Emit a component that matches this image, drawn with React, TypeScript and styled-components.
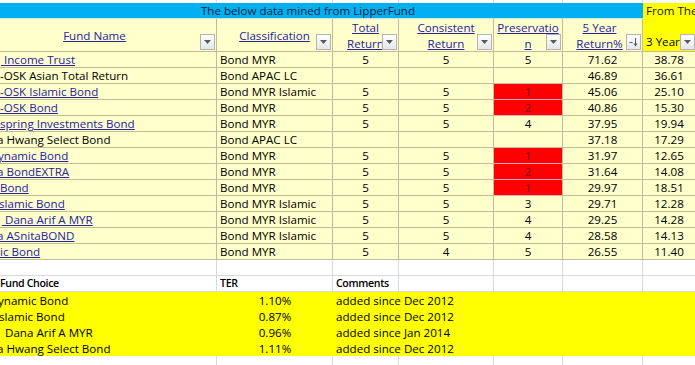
import React from "react";
import styled, { createGlobalStyle } from "styled-components";

const PALE = "#FFFFCC";
const TAN = "#C2BC9E";
const GRID = "#D9D9D9";
const LINK = "#2424A4";

const GlobalStyle = createGlobalStyle`
  html, body { margin: 0; padding: 0; background: #fff; overflow: hidden; }
  body {
    font-family: "Open Sans", "Liberation Sans", sans-serif;
    font-size: 11.6px;
    color: #000;
  }
`;

const Sheet = styled.div`
  display: grid;
  grid-template-columns: 217px 116px 66px 95px 69px 80px 53px;
  grid-template-rows: 3px 16px 33px repeat(13, 16px) 16px 16px repeat(4, 16px) 16px;
  width: 696px;
`;

const BaseCell = styled.div<{ $align?: "left" | "center"; $indent?: number; $bold?: boolean }>`
  box-sizing: border-box;
  display: flex;
  align-items: center;
  justify-content: ${(p) => (p.$align === "center" ? "center" : "flex-start")};
  padding: 0 ${(p) => (p.$align === "center" ? "0" : "3px")};
  ${(p) => (p.$indent !== undefined ? `padding-left: 0; text-indent: ${p.$indent}px;` : "")}
  white-space: pre;
  overflow: hidden;
  line-height: 15px;
  ${(p) => (p.$bold ? "font-weight: 600; font-size: 10.6px; letter-spacing: -0.35px;" : "")}
`;

const TopCell = styled.div`
  box-sizing: border-box;
  border-right: 1px solid ${GRID};
  background: #fff;
`;

const GridCell = styled(BaseCell)`
  background: #fff;
  border-right: 1px solid ${GRID};
  border-bottom: 1px solid ${GRID};
`;

const DataCell = styled(BaseCell)<{ $red?: boolean }>`
  background: ${(p) => (p.$red ? "#FF0000" : PALE)};
  color: ${(p) => (p.$red ? "#6E0A0A" : "#000")};
  border-right: 1px solid ${TAN};
  border-bottom: 1px solid ${(p) => (p.$red ? "#E8B0A8" : TAN)};
`;

const HighlightCell = styled(BaseCell)<{ $span?: number }>`
  background: #FFFF00;
  grid-column: span ${(p) => p.$span ?? 1};
`;

const Band = styled.div`
  grid-column: 1 / 7;
  box-sizing: border-box;
  background: #00B0F0;
  border-bottom: 1px solid #CBE6EE;
  display: flex;
  align-items: center;
  justify-content: center;
  padding-right: 27px;
  color: #14223A;
  line-height: 15px;
`;

const Corner = styled.div`
  grid-column: 7;
  grid-row: 2 / 4;
  box-sizing: border-box;
  background: #FFFF00;
  border-bottom: 1px solid ${TAN};
  position: relative;
  display: flex;
  flex-direction: column;
  justify-content: space-between;
  padding: 0 0 1px 3px;
  line-height: 16px;
  white-space: nowrap;
  overflow: hidden;
  color: #14223A;
`;

const CornerBottom = styled.div`
  color: #000;
`;

const HeaderCell = styled.div<{ $shift?: number }>`
  grid-row: 3;
  box-sizing: border-box;
  background: ${PALE};
  border-right: 1px solid ${TAN};
  border-bottom: 1px solid ${TAN};
  position: relative;
  display: flex;
  flex-direction: column;
  align-items: center;
  justify-content: center;
  padding-right: ${(p) => p.$shift ?? 0}px;
  padding-top: 1px;
  overflow: hidden;
`;

const HeaderLine = styled.span`
  color: ${LINK};
  text-decoration: underline;
  text-underline-offset: 1px;
  line-height: 16px;
  white-space: nowrap;
`;

const FilterButton = styled.div`
  position: absolute;
  right: 1px;
  bottom: 1px;
  width: 15px;
  height: 16px;
  box-sizing: border-box;
  border: 1px solid #B4B4B4;
  background: linear-gradient(#FFFFFF, #E4E6EA);
  display: flex;
  align-items: center;
  justify-content: center;
`;

const LinkText = styled.span`
  color: ${LINK};
  text-decoration: underline;
  text-underline-offset: 1px;
`;

const Arrow = () => (
  <svg width="7" height="4" viewBox="0 0 7 4">
    <path d="M0 0 L7 0 L3.5 4 Z" fill="#5A5A5A" />
  </svg>
);

const SortArrow = () => (
  <svg width="11" height="12" viewBox="0 0 11 12">
    <path d="M1.5 6.5 H4.5" stroke="#5A5A5A" strokeWidth="1" />
    <path d="M7.5 2 V9" stroke="#5A5A5A" strokeWidth="1" />
    <path d="M5.5 7.5 L7.5 10.5 L9.5 7.5 Z" fill="#5A5A5A" />
  </svg>
);

type Row = {
  name: string;
  link: boolean;
  indent: number;
  cls: string;
  tr: string;
  cr: string;
  pr: string;
  red: boolean;
  y5: string;
  y3: string;
};

const r = (
  name: string,
  link: boolean,
  indent: number,
  cls: string,
  tr: string,
  cr: string,
  pr: string,
  red: boolean,
  y5: string,
  y3: string
): Row => ({ name, link, indent, cls, tr, cr, pr, red, y5, y3 });

const rows: Row[] = [
  r(" Income Trust", true, 1, "Bond MYR", "5", "5", "5", false, "71.62", "38.78"),
  r("-OSK Asian Total Return", false, 0, "Bond APAC LC", "", "", "", false, "46.89", "36.61"),
  r("-OSK Islamic Bond", true, 0, "Bond MYR Islamic", "5", "5", "1", true, "45.06", "25.10"),
  r("-OSK Bond", true, 0, "Bond MYR", "5", "5", "2", true, "40.86", "15.30"),
  r("spring Investments Bond", true, 0, "Bond MYR", "5", "5", "4", false, "37.95", "19.94"),
  r("a Hwang Select Bond", false, -3, "Bond APAC LC", "", "", "", false, "37.18", "17.29"),
  r("ynamic Bond", true, -2, "Bond MYR", "5", "5", "1", true, "31.97", "12.65"),
  r("a BondEXTRA", true, -3, "Bond MYR", "5", "5", "2", true, "31.64", "14.08"),
  r("Bond", true, 0, "Bond MYR", "5", "5", "1", true, "29.97", "18.51"),
  r("slamic Bond", true, -1, "Bond MYR Islamic", "5", "5", "3", false, "29.71", "12.28"),
  r(" Dana Arif A MYR", true, 2, "Bond MYR Islamic", "5", "5", "4", false, "29.25", "14.28"),
  r("a ASnitaBOND", true, -3, "Bond MYR Islamic", "5", "5", "4", false, "28.58", "14.13"),
  r("ic Bond", true, 0, "Bond MYR", "5", "4", "5", false, "26.55", "11.40"),
];

const choices = [
  { name: "ynamic Bond", indent: -2, ter: "1.10%", note: "added since Dec 2012" },
  { name: "slamic Bond", indent: -1, ter: "0.87%", note: "added since Dec 2012" },
  { name: " Dana Arif A MYR", indent: 2, ter: "0.96%", note: "added since Jan 2014" },
  { name: "a Hwang Select Bond", indent: -3, ter: "1.11%", note: "added since Dec 2012" },
];

const headers: { lines: string[]; shift?: number; sort?: boolean }[] = [
  { lines: ["Fund Name"], shift: 27 },
  { lines: ["Classification"] },
  { lines: ["Total", "Return"] },
  { lines: ["Consistent", "Return"] },
  { lines: ["Preservatio", "n"] },
  { lines: ["5 Year", "Return%"], shift: 6, sort: true },
];

const blank = Array.from({ length: 7 });

export default function App() {
  return (
    <>
      <GlobalStyle />
      <Sheet>
        {blank.map((_, i) => (
          <TopCell key={`t${i}`} />
        ))}
        <Band>The below data mined from LipperFund</Band>
        <Corner>
          <div>From The</div>
          <CornerBottom>3 Year</CornerBottom>
          <FilterButton>
            <Arrow />
          </FilterButton>
        </Corner>
        {headers.map((h, i) => (
          <HeaderCell key={`h${i}`} $shift={h.shift}>
            {h.lines.map((l) => (
              <HeaderLine key={l}>{l}</HeaderLine>
            ))}
            <FilterButton>{h.sort ? <SortArrow /> : <Arrow />}</FilterButton>
          </HeaderCell>
        ))}
        {rows.map((row, i) => (
          <React.Fragment key={`r${i}`}>
            <DataCell $indent={row.indent}>
              {row.link ? <LinkText>{row.name}</LinkText> : row.name}
            </DataCell>
            <DataCell>{row.cls}</DataCell>
            <DataCell $align="center">{row.tr}</DataCell>
            <DataCell $align="center">{row.cr}</DataCell>
            <DataCell $align="center" $red={row.red}>
              {row.pr}
            </DataCell>
            <DataCell $align="center">{row.y5}</DataCell>
            <DataCell $align="center">{row.y3}</DataCell>
          </React.Fragment>
        ))}
        {blank.map((_, i) => (
          <GridCell key={`b${i}`} />
        ))}
        <GridCell $bold $indent={0}>Fund Choice</GridCell>
        <GridCell $bold>TER</GridCell>
        <GridCell $bold>Comments</GridCell>
        <GridCell />
        <GridCell />
        <GridCell />
        <GridCell />
        {choices.map((c, i) => (
          <React.Fragment key={`c${i}`}>
            <HighlightCell $indent={c.indent}>{c.name}</HighlightCell>
            <HighlightCell $align="center">{c.ter}</HighlightCell>
            <HighlightCell $span={5}>{c.note}</HighlightCell>
          </React.Fragment>
        ))}
        {blank.map((_, i) => (
          <GridCell key={`e${i}`} />
        ))}
      </Sheet>
    </>
  );
}
